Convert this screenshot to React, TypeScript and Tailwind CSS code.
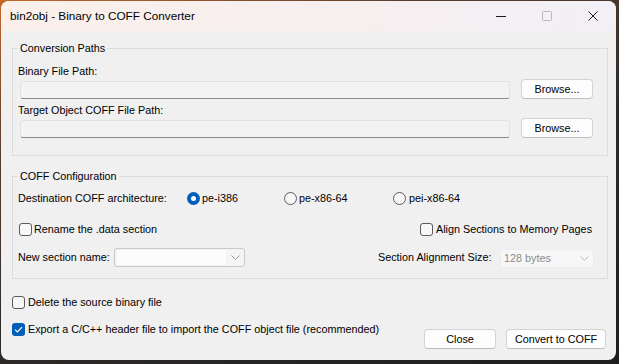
import React from "react";

const labelCls = "h-[16px] leading-[16px] whitespace-nowrap";

function Check({ checked }: { checked?: boolean }) {
  if (checked) {
    return (
      <span className="flex h-[13px] w-[13px] shrink-0 items-center justify-center rounded-[3px] bg-[#005fb8]">
        <svg width="9" height="7" viewBox="0 0 9 7">
          <path d="M1 3.6 L3.4 6 L8 1.2" stroke="#fff" strokeWidth="1.2" fill="none" />
        </svg>
      </span>
    );
  }
  return <span className="h-[13px] w-[13px] shrink-0 rounded-[3px] border border-[#5c5c5c] bg-[#f8f8f8]" />;
}

function Radio({ checked }: { checked?: boolean }) {
  if (checked) {
    return (
      <span className="flex h-[13px] w-[13px] shrink-0 items-center justify-center rounded-full bg-[#005fb8]">
        <span className="h-[5px] w-[5px] rounded-full bg-white" />
      </span>
    );
  }
  return <span className="h-[13px] w-[13px] shrink-0 rounded-full border border-[#5c5c5c] bg-[#f8f8f8]" />;
}

function Chevron({ color }: { color: string }) {
  return (
    <svg width="9" height="5" viewBox="0 0 9 5">
      <polyline points="0.5,0.5 4.5,4.5 8.5,0.5" stroke={color} strokeWidth="1" fill="none" />
    </svg>
  );
}

function Button({ children, w }: { children: React.ReactNode; w: string }) {
  return (
    <button
      className={`${w} h-[20px] rounded-[4px] border border-[#d3d3d3] border-b-[#bdbdbd] bg-[#fdfdfd] text-center leading-[18px] text-black`}
    >
      {children}
    </button>
  );
}

function PathRow() {
  return (
    <div className="flex h-[20px] items-end">
      <div className="ml-[7px] h-[18px] w-[490px] rounded-[3px] border border-[#e2e2e2] border-b-[#8a8a8a] bg-[#f3f3f3]" />
      <div className="ml-[11px]">
        <Button w="w-[72px]">Browse...</Button>
      </div>
    </div>
  );
}

export default function App() {
  return (
    <div className="h-[364px] w-[619px] overflow-hidden bg-[linear-gradient(160deg,#c4682a_0%,#5a3f2e_25%,#2e2c2b_55%,#1e1e1e_100%)] pl-[1px] pt-[1px] font-['Liberation_Sans',Arial,sans-serif] text-[10.8px] text-black">
      <div className="flex h-[359px] w-[615px] flex-col overflow-hidden rounded-[8px] bg-[#f0f0f0]">
        {/* title bar */}
        <div className="flex h-[30px] shrink-0 items-center bg-[linear-gradient(90deg,#fbf0ea,#f6eff0_60%,#f2f0f6)]">
          <span className="ml-[9px] text-[11.75px] text-black">bin2obj - Binary to COFF Converter</span>
          <div className="ml-auto flex h-full">
            <div className="flex h-full w-[46px] items-center justify-center">
              <svg width="10" height="10" viewBox="0 0 10 10">
                <line x1="0" y1="5.5" x2="10" y2="5.5" stroke="#1a1a1a" strokeWidth="1" />
              </svg>
            </div>
            <div className="flex h-full w-[46px] items-center justify-center">
              <svg width="10" height="10" viewBox="0 0 10 10">
                <rect x="0.5" y="0.5" width="9" height="9" rx="1" stroke="#b8b8b8" strokeWidth="1" fill="none" />
              </svg>
            </div>
            <div className="flex h-full w-[46px] items-center justify-center">
              <svg width="10" height="10" viewBox="0 0 10 10">
                <path d="M0.5 0.5 L9.5 9.5 M9.5 0.5 L0.5 9.5" stroke="#1a1a1a" strokeWidth="1" />
              </svg>
            </div>
          </div>
        </div>

        {/* body */}
        <div className="flex flex-col pl-[11px]">
          <fieldset className="mt-[9px] w-[596px] border border-[#dcdcdc] px-0 pb-[17px] pt-0">
            <legend className="ml-[5px] h-[16px] px-[2px] leading-[16px]">Conversion Paths</legend>
            <div className={`mt-[7px] pl-[5px] ${labelCls}`}>Binary File Path:</div>
            <PathRow />
            <div className={`mt-[3px] pl-[5px] ${labelCls}`}>Target Object COFF File Path:</div>
            <PathRow />
          </fieldset>

          <fieldset className="mt-[12px] w-[596px] border border-[#dcdcdc] px-0 pb-[11px] pt-0">
            <legend className="ml-[5px] h-[16px] px-[2px] leading-[16px]">COFF Configuration</legend>
            <div className="mt-[6px] flex h-[16px] items-center pl-[5px]">
              <span className="w-[169px] whitespace-nowrap">Destination COFF architecture:</span>
              <span className="flex w-[97px] items-center">
                <Radio checked />
                <span className="ml-[2px]">pe-i386</span>
              </span>
              <span className="flex w-[109px] items-center">
                <Radio />
                <span className="ml-[2px]">pe-x86-64</span>
              </span>
              <span className="flex items-center">
                <Radio />
                <span className="ml-[3px]">pei-x86-64</span>
              </span>
            </div>

            <div className="mt-[15px] flex h-[16px] items-center pl-[6px]">
              <span className="flex w-[401px] items-center">
                <Check />
                <span className="ml-[2px]">Rename the .data section</span>
              </span>
              <span className="flex items-center">
                <Check />
                <span className="ml-[3px]">Align Sections to Memory Pages</span>
              </span>
            </div>

            <div className="mt-[10px] flex h-[20px] items-center pl-[5px]">
              <span className="w-[96px] whitespace-nowrap">New section name:</span>
              <div className="flex h-[19px] w-[131px] items-center rounded-[3px] border border-[#c9c9c9] bg-[#f4f4f4] pl-[2px]">
                <div className="h-[15px] w-[109px] bg-[#fcfcfc]" />
                <div className="flex flex-1 justify-center">
                  <Chevron color="#9a9a9a" />
                </div>
              </div>
              <span className="ml-[133px] w-[122px] whitespace-nowrap">Section Alignment Size:</span>
              <div className="mt-[2px] flex h-[19px] w-[94px] items-center rounded-[3px] border border-[#ececec] bg-[#f7f7f7] pl-[3px] pr-[4px] text-[#8c8c8c]">
                <span>128 bytes</span>
                <span className="ml-auto">
                  <Chevron color="#b9b9b9" />
                </span>
              </div>
            </div>
          </fieldset>

          <div className="mt-[15px] flex h-[16px] items-center">
            <Check />
            <span className="ml-[3px]">Delete the source binary file</span>
          </div>

          <div className="mt-[11px] flex w-[596px] items-start">
            <div className="flex h-[16px] items-center">
              <Check checked />
              <span className="ml-[3px] whitespace-nowrap">
                Export a C/C++ header file to import the COFF object file (recommended)
              </span>
            </div>
            <div className="ml-auto mr-[2px] mt-[8px] flex gap-[10px]">
              <Button w="w-[72px]">Close</Button>
              <Button w="w-[100px]">Convert to COFF</Button>
            </div>
          </div>
        </div>
      </div>
    </div>
  );
}
